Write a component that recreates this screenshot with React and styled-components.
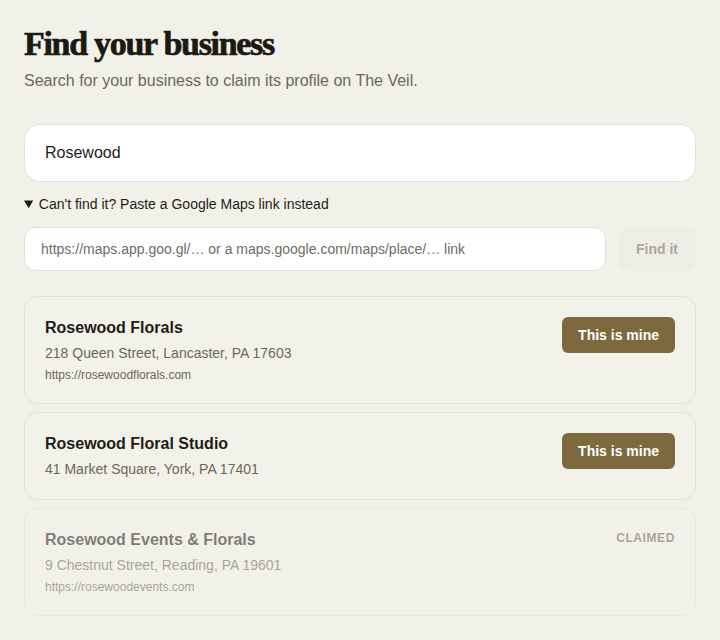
import React, { useState } from 'react'
import styled, { createGlobalStyle } from 'styled-components'

const GlobalStyle = createGlobalStyle`
  * { box-sizing: border-box; }
  body {
    margin: 0;
    background: #f2f1e9;
    font-family: "Liberation Sans", Arial, sans-serif;
    color: #1f1c16;
  }
`

const results = [
  { name: 'Rosewood Florals', address: '218 Queen Street, Lancaster, PA 17603', url: 'https://rosewoodflorals.com' },
  { name: 'Rosewood Floral Studio', address: '41 Market Square, York, PA 17401' },
  { name: 'Rosewood Events & Florals', address: '9 Chestnut Street, Reading, PA 19601', url: 'https://rosewoodevents.com', claimed: true },
]

const App = () => {
  const [query, setQuery] = useState('Rosewood')
  const [link, setLink] = useState('')

  return (
    <>
      <GlobalStyle />
      <Page>
        <Title>Find your business</Title>
        <Subtitle>Search for your business to claim its profile on The Veil.</Subtitle>

        <SearchInput value={query} onChange={(e) => setQuery(e.target.value)} />

        <Details open>
          <Summary>Can't find it? Paste a Google Maps link instead</Summary>
          <LinkRow>
            <LinkInput
              value={link}
              onChange={(e) => setLink(e.target.value)}
              placeholder="https://maps.app.goo.gl/… or a maps.google.com/maps/place/… link"
            />
            <FindButton disabled={!link}>Find it</FindButton>
          </LinkRow>
        </Details>

        <List>
          {results.map((r) => (
            <Card key={r.name} $claimed={r.claimed}>
              <Info>
                <Name>{r.name}</Name>
                <Address>{r.address}</Address>
                {r.url && <Url>{r.url}</Url>}
              </Info>
              {r.claimed ? <Claimed>Claimed</Claimed> : <MineButton>This is mine</MineButton>}
            </Card>
          ))}
        </List>
      </Page>
    </>
  )
}

export default App

const Page = styled.div`
  padding: 24px 24px;
  display: flex;
  flex-direction: column;
`

const Title = styled.h1`
  margin: 0;
  font-family: "Liberation Serif", "Times New Roman", serif;
  font-weight: 700;
  font-size: 34px;
  line-height: 40px;
  letter-spacing: -1.3px;
  color: #1c1912;
  -webkit-text-stroke: 0.7px #1c1912;
`

const Subtitle = styled.p`
  margin: 6px 0 0;
  font-size: 16px;
  line-height: 22px;
  color: #6b6759;
`

const SearchInput = styled.input`
  margin-top: 32px;
  height: 58px;
  width: 100%;
  padding: 0 20px;
  border: 1px solid #e3e1d6;
  border-radius: 16px;
  background: #fff;
  font-family: inherit;
  font-size: 16px;
  color: #1f1c16;
  outline: none;
`

const Details = styled.details`
  margin-top: 13px;
`

const Summary = styled.summary`
  font-size: 14px;
  line-height: 18px;
  color: #1f1c16;
  cursor: pointer;
  list-style-position: inside;
`

const LinkRow = styled.div`
  margin-top: 14px;
  display: flex;
  gap: 12px;
`

const LinkInput = styled.input`
  flex: 1;
  height: 44px;
  padding: 0 16px;
  border: 1px solid #e3e1d6;
  border-radius: 12px;
  background: #fff;
  font-family: inherit;
  font-size: 14px;
  color: #1f1c16;
  outline: none;

  &::placeholder {
    color: #6e6c64;
  }
`

const FindButton = styled.button`
  width: 78px;
  height: 44px;
  border: none;
  border-radius: 12px;
  background: #eeede5;
  font-family: inherit;
  font-size: 14px;
  font-weight: 700;
  color: #a9a79d;
`

const List = styled.div`
  margin-top: 25px;
  display: flex;
  flex-direction: column;
  gap: 8px;
`

const Card = styled.div`
  display: flex;
  justify-content: space-between;
  align-items: flex-start;
  padding: 20px;
  border: 1px solid #e2e0d5;
  border-radius: 14px;
  background: #f3f2ea;
  opacity: ${(p) => (p.$claimed ? 0.55 : 1)};
`

const Info = styled.div`
  display: flex;
  flex-direction: column;
  gap: 4px;
`

const Name = styled.div`
  font-size: 16px;
  line-height: 22px;
  font-weight: 700;
  color: #1f1c16;
`

const Address = styled.div`
  font-size: 14px;
  line-height: 20px;
  color: #6b6759;
`

const Url = styled.div`
  font-size: 12px;
  line-height: 16px;
  color: #6b6759;
`

const MineButton = styled.button`
  height: 36px;
  padding: 0 16px;
  border: none;
  border-radius: 6px;
  background: #7c6a3e;
  font-family: inherit;
  font-size: 14px;
  font-weight: 700;
  color: #fff;
  cursor: pointer;
`

const Claimed = styled.span`
  margin-top: 2px;
  font-size: 12px;
  font-weight: 700;
  letter-spacing: 0.6px;
  text-transform: uppercase;
  color: #6b6759;
`
